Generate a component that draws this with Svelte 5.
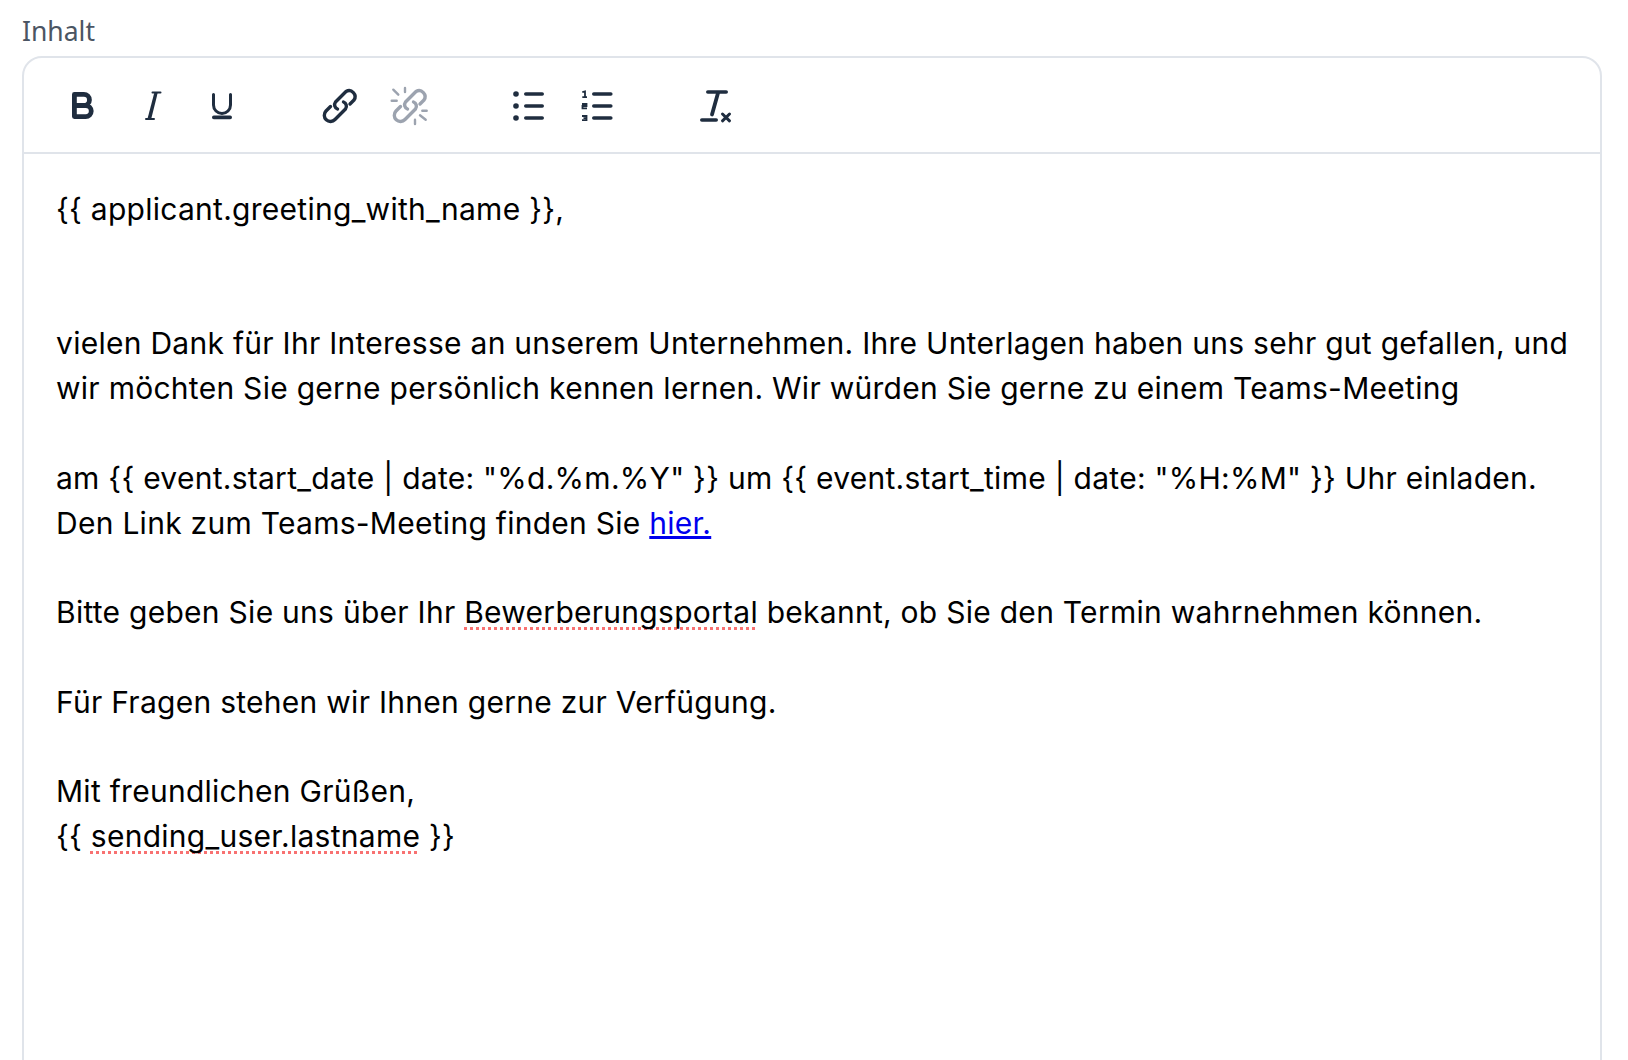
<script>
  const link = "M17.500 24A4.600 4.600 0 0 1 15.500 17L26 6.500A6 6 0 0 1 34 15L30 19M23.500 17A4.600 4.600 0 0 1 25.500 24L15 34.500A6 6 0 0 1 6 26L10.500 21.500";
  const rays = "M3.300 4.700l5 5M15 3v4M1.700 15.700h5M36.700 25.700h-4.400M25 34.700V39M30 30.300l5.700 4.400";
</script>

<main class="page">
  <div class="label">Inhalt</div>
  <section class="editor">
    <div class="toolbar">
      <div class="group">
        <button aria-label="Fett"><svg viewBox="0 0 40 40"><path class="s" stroke-width="4.800" d="M12.400 9.400h9.500a5.500 5.500 0 0 1 0 11.100h-9.500zM12.400 20.500h11.300a5.550 5.550 0 0 1 0 11.100H12.400z"/></svg></button>
        <button aria-label="Kursiv"><svg viewBox="0 0 40 40"><path class="s" stroke-width="2" d="M20.500 7.500h8M14 34h8"/><path class="f" d="M22.500 7h3.400l-6.800 27.500h-3.800z"/></svg></button>
        <button aria-label="Unterstrichen"><svg viewBox="0 0 40 40"><path class="s" stroke-width="3" d="M11.500 9.500v10.500a8.500 8.500 0 0 0 17 0V9.500"/><path class="s" stroke-width="3.600" d="M11.800 32.400h16.400"/></svg></button>
      </div>
      <div class="group">
        <button aria-label="Link"><svg viewBox="0 0 40 40"><path class="s" stroke-width="3.400" d={link}/></svg></button>
        <button aria-label="Link entfernen"><svg class="muted" viewBox="0 0 40 40"><path class="s" stroke-width="3.400" d={link}/><path class="s" stroke-width="2.400" d={rays}/></svg></button>
      </div>
      <div class="group">
        <button aria-label="Liste"><svg viewBox="0 0 40 40"><circle class="f" cx="8" cy="9" r="2.800"/><circle class="f" cx="8" cy="21" r="2.800"/><circle class="f" cx="8" cy="33" r="2.800"/><path class="s" stroke-width="3.600" d="M17.800 9h16.400M17.800 21h16.400M17.800 33h16.400"/></svg></button>
        <button aria-label="Nummerierte Liste"><svg viewBox="0 0 40 40"><path class="s" stroke-width="3.600" d="M15.800 9h17M15.800 21h17M15.800 33h17"/><path class="d" d="M4.300 7.200 7 6.500V12.500M4.300 12.200H9M4 19H8.500V21H4.500V23.300H9M4 31H8.500V35.200H4M5.500 33.100H8.500"/></svg></button>
      </div>
      <div class="group">
        <button aria-label="Formatierung entfernen"><svg viewBox="0 0 40 40"><path class="s" stroke-width="3.600" d="M11.800 7h18.400"/><path class="s" stroke-width="3.800" d="M22 8 16 29.500"/><path class="s" stroke-width="3.600" d="M5.800 35h14.400"/><path class="s" stroke-width="3" d="M26.500 29l7 6.800M33.500 29l-7 6.800"/></svg></button>
      </div>
    </div>
    <div class="content">
      <p>{'{{'} applicant.greeting_with_name {'}}'},</p>
      <p><br /></p>
      <p><br /></p>
      <p>vielen Dank für Ihr Interesse an unserem Unternehmen. Ihre Unterlagen haben uns sehr gut gefallen, und wir möchten Sie gerne persönlich kennen lernen. Wir würden Sie gerne zu einem Teams-Meeting</p>
      <p><br /></p>
      <p>am {'{{'} event.start_date | date: "%d.%m.%Y" {'}}'} um {'{{'} event.start_time | date: "%H:%M" {'}}'} Uhr einladen.</p>
      <p>Den Link zum Teams-Meeting finden Sie <a href="#top">hier.</a></p>
      <p><br /></p>
      <p>Bitte geben Sie uns über Ihr <span class="typo">Bewerberungsportal</span> bekannt, ob Sie den Termin wahrnehmen können.</p>
      <p><br /></p>
      <p>Für Fragen stehen wir Ihnen gerne zur Verfügung.</p>
      <p><br /></p>
      <p>Mit freundlichen Grüßen,</p>
      <p>{'{{'} <span class="typo">sending_user.lastname</span> {'}}'}</p>
    </div>
  </section>
</main>

<style>
  :global(body) {
    margin: 0;
    background: #fff;
    overflow: hidden;
  }
  .page {
    height: 1060px;
    overflow: hidden;
    padding: 15px 26px 0 22px;
    box-sizing: border-box;
  }
  .label {
    font-family: "Noto Sans", sans-serif;
    font-size: 26.500px;
    line-height: 32px;
    color: #4b5563;
    margin-bottom: 9px;
  }
  .editor {
    border: 2px solid #e0e4ea;
    border-radius: 20px;
    height: 1200px;
    box-sizing: border-box;
  }
  .toolbar {
    display: flex;
    gap: 48px;
    height: 94px;
    padding-left: 23px;
    border-bottom: 2px solid #e0e4ea;
    align-items: center;
  }
  .group {
    display: flex;
  }
  button {
    width: 70px;
    height: 44px;
    padding: 0;
    border: 0;
    background: none;
    display: flex;
    align-items: center;
    justify-content: center;
  }
  svg {
    width: 40px;
    height: 40px;
    flex: none;
    color: #1f2d3f;
    overflow: visible;
  }
  svg.muted {
    color: #9ca3af;
  }
  .s {
    fill: none;
    stroke: currentColor;
    stroke-linecap: round;
    stroke-linejoin: round;
  }
  .f {
    fill: currentColor;
  }
  .d {
    fill: none;
    stroke: currentColor;
    stroke-width: 1.800;
  }
  .content {
    padding: 33px 26px 0 32px;
    font-family: Inter, sans-serif;
    font-size: 30px;
    line-height: 44.800px;
    letter-spacing: 0.270px;
    font-feature-settings: "calt" 0;
    color: #000;
  }
  p {
    margin: 0;
  }
  a {
    color: #0000ee;
    text-decoration: underline;
  }
  .typo {
    text-decoration: underline dotted #f87171 3px;
    text-underline-offset: 4px;
    text-decoration-skip-ink: none;
  }
</style>
